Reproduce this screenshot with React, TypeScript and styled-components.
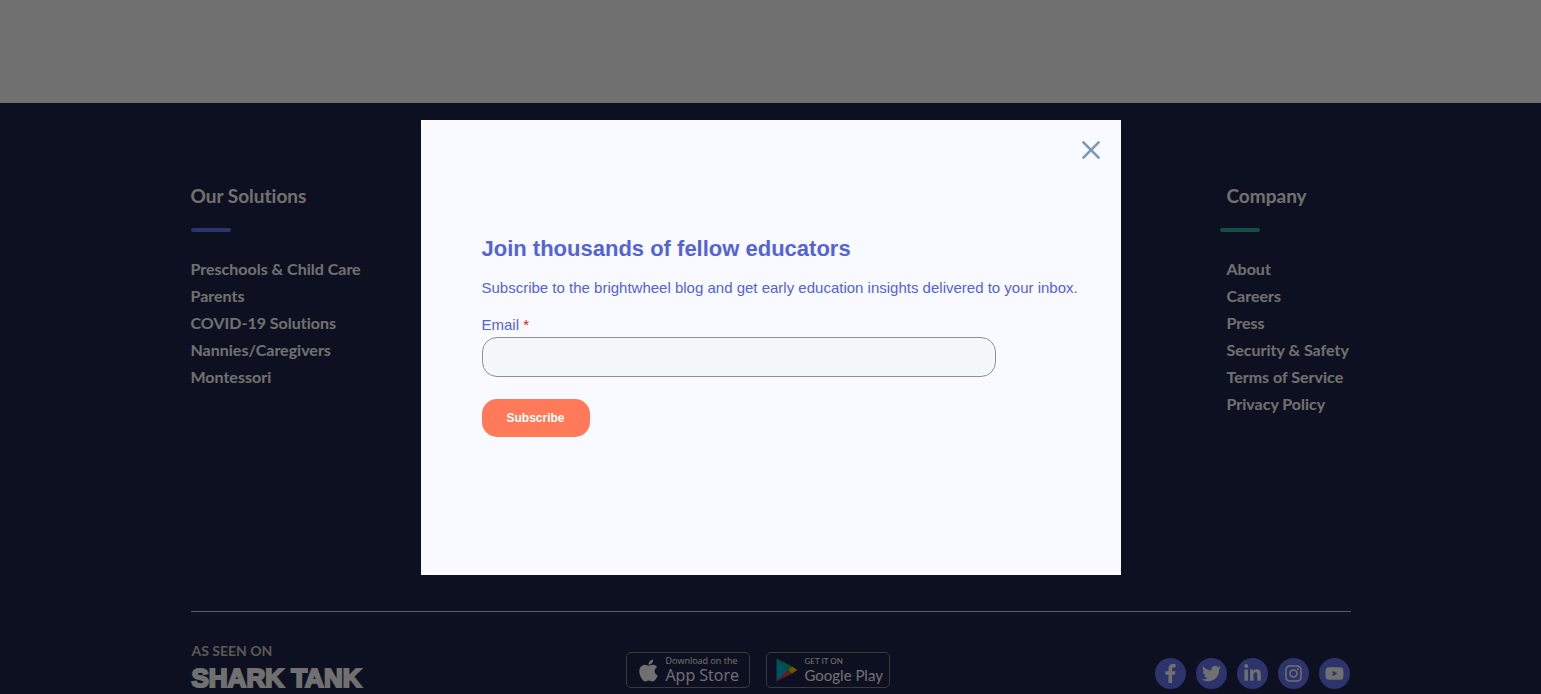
import React from "react";
import styled, { createGlobalStyle } from "styled-components";
import { FaApple, FaFacebookF, FaInstagram, FaLinkedinIn, FaTwitter, FaYoutube } from "react-icons/fa";

const GlobalStyle = createGlobalStyle`
  * { box-sizing: border-box; }
  body {
    margin: 0;
    background: #ffffff;
    font-family: Lato, "Liberation Sans", sans-serif;
    font-variant-ligatures: none;
  }
`;

const Page = styled.div`
  display: flex;
  flex-direction: column;
  height: 100vh;
  overflow: hidden;
`;

const Content = styled.main`
  flex: none;
  height: 103px;
  background: #ffffff;
`;

const Footer = styled.footer`
  flex: 1 0 auto;
  background: #1e2549;
  color: #ffffff;
  padding: 80px 24px 0;
`;

const Container = styled.div`
  max-width: 1160px;
  margin: 0 auto;
`;

const Columns = styled.div`
  display: flex;
  justify-content: space-between;
  min-height: 429px;
  border-bottom: 1px solid #d4d4de;
`;

const Column = styled.nav<{ $inset?: number }>`
  min-width: 131px;
  h2, ul { padding-left: ${(p) => p.$inset ?? 0}px; }
`;

const ColumnTitle = styled.h2`
  margin: 0;
  font-size: 19px;
  line-height: 26px;
  font-weight: 700;
`;

const Accent = styled.div<{ $color: string }>`
  width: 40px;
  height: 4px;
  margin: 19px 0 23px;
  border-radius: 2px;
  background: ${(p) => p.$color};
`;

const LinkList = styled.ul`
  margin: 0;
  padding: 0;
  list-style: none;
`;

const LinkItem = styled.li`
  font-size: 16px;
  line-height: 27px;
  font-weight: 700;
  white-space: nowrap;
  a { color: inherit; text-decoration: none; }
`;

const BottomBar = styled.div`
  display: flex;
  justify-content: space-between;
  align-items: flex-start;
  padding-top: 31px;
`;

const SeenOn = styled.div`
  padding-left: 1px;
  font-size: 14px;
  line-height: 16px;
  font-weight: 700;
  color: #c8c8c8;
`;

const SharkTank = styled.div`
  padding-left: 1px;
  font-family: "Liberation Sans", Arial, sans-serif;
  font-size: 26px;
  line-height: 38px;
  font-weight: 700;
  color: #ffffff;
  white-space: nowrap;
  -webkit-text-stroke: 2px #ffffff;
`;

const Badges = styled.div`
  display: flex;
  gap: 16px;
  padding-top: 9px;
`;

const Badge = styled.a<{ $gap: number }>`
  display: flex;
  align-items: center;
  gap: ${(p) => p.$gap}px;
  width: 124px;
  height: 36px;
  padding: 0 0 0 9px;
  border: 1px solid #80808c;
  border-radius: 5px;
  color: #ffffff;
  text-decoration: none;
  white-space: nowrap;
  svg { flex: none; }
`;

const BadgeText = styled.span<{ $font: string }>`
  display: flex;
  flex-direction: column;
  padding-bottom: 2px;
  font-family: ${(p) => p.$font};
`;

const BadgeSmall = styled.span<{ $size: number }>`
  font-size: ${(p) => p.$size}px;
  line-height: 12px;
`;

const BadgeLarge = styled.span<{ $size: number; $weight: number }>`
  font-size: ${(p) => p.$size}px;
  line-height: 16px;
  font-weight: ${(p) => p.$weight};
`;

const Socials = styled.div`
  display: flex;
  gap: 10px;
  padding-top: 15px;
`;

const Social = styled.a`
  display: flex;
  align-items: center;
  justify-content: center;
  width: 31px;
  height: 31px;
  border-radius: 50%;
  background: #6874f4;
  color: #ffffff;
  font-size: 19px;
`;

const Overlay = styled.div`
  position: fixed;
  inset: 0;
  display: flex;
  align-items: center;
  justify-content: center;
  background: rgba(0, 0, 0, 0.56);
`;

const Dialog = styled.section`
  position: relative;
  width: 700px;
  max-width: 100%;
  padding: 113px 40px 138px 61px;
  background: #f8faff;
  color: #5463d6;
  font-family: "Liberation Sans", Arial, sans-serif;
`;

const CloseButton = styled.button`
  position: absolute;
  top: 20px;
  right: 20px;
  display: flex;
  padding: 0;
  border: 0;
  background: none;
  color: #7c98b6;
  cursor: pointer;
`;

const DialogTitle = styled.h1`
  margin: 0;
  font-size: 22px;
  line-height: 32px;
  font-weight: 700;
`;

const Intro = styled.p`
  margin: 11px 0 14px;
  font-size: 15px;
  line-height: 24px;
`;

const Label = styled.label`
  display: block;
  font-size: 15px;
  line-height: 22px;
`;

const Required = styled.span`
  color: #e51520;
`;

const EmailInput = styled.input`
  display: block;
  width: 514px;
  max-width: 100%;
  height: 40px;
  margin: 1px 0 22px;
  padding: 0 14px;
  border: 1px solid #8f8f94;
  border-radius: 15px;
  background: #f5f8fa;
  font: inherit;
`;

const SubscribeButton = styled.button`
  display: block;
  height: 38px;
  padding: 0 25px;
  border: 0;
  border-radius: 15px;
  background: #ff7a59;
  color: #ffffff;
  font: 700 12px "Liberation Sans", Arial, sans-serif;
  cursor: pointer;
`;

const PlayLogo = () => (
  <svg width="22" height="24" viewBox="0 0 22 24" aria-hidden="true">
    <path d="M0.5 0.5V23.5L12 12Z" fill="#00b8dc" />
    <path d="M0.5 0.5L16 8.5L12 12Z" fill="#00c874" />
    <path d="M0.5 23.5L16 15.5L12 12Z" fill="#f03c48" />
    <path d="M16 8.5L21.5 12L16 15.5L12 12Z" fill="#fcc400" />
  </svg>
);

const solutions = ["Preschools & Child Care", "Parents", "COVID-19 Solutions", "Nannies/Caregivers", "Montessori"];
const company = ["About", "Careers", "Press", "Security & Safety", "Terms of Service", "Privacy Policy"];
const socials = [
  { name: "Facebook", icon: <FaFacebookF /> },
  { name: "Twitter", icon: <FaTwitter /> },
  { name: "LinkedIn", icon: <FaLinkedinIn /> },
  { name: "Instagram", icon: <FaInstagram /> },
  { name: "YouTube", icon: <FaYoutube /> },
];

interface FooterColumnProps {
  title: string;
  color: string;
  links: string[];
  inset?: number;
}

const FooterColumn = ({ title, color, links, inset }: FooterColumnProps) => (
  <Column $inset={inset} aria-label={title}>
    <ColumnTitle>{title}</ColumnTitle>
    <Accent $color={color} />
    <LinkList>
      {links.map((link) => (
        <LinkItem key={link}><a href="#">{link}</a></LinkItem>
      ))}
    </LinkList>
  </Column>
);

export default function App() {
  return (
    <Page>
      <GlobalStyle />
      <Content />
      <Footer>
        <Container>
          <Columns>
            <FooterColumn title="Our Solutions" color="#6874f4" links={solutions} />
            <FooterColumn title="Company" color="#2fb4a4" links={company} inset={7} />
          </Columns>
          <BottomBar>
            <div>
              <SeenOn>AS SEEN ON</SeenOn>
              <SharkTank>SHARK TANK</SharkTank>
            </div>
            <Badges>
              <Badge href="#" $gap={4}>
                <FaApple size={25} />
                <BadgeText $font='"Open Sans", sans-serif'>
                  <BadgeSmall $size={9}>Download on the</BadgeSmall>
                  <BadgeLarge $size={16} $weight={500}>App Store</BadgeLarge>
                </BadgeText>
              </Badge>
              <Badge href="#" $gap={6}>
                <PlayLogo />
                <BadgeText $font="Lato, sans-serif">
                  <BadgeSmall $size={8}>GET IT ON</BadgeSmall>
                  <BadgeLarge $size={15} $weight={400}>Google Play</BadgeLarge>
                </BadgeText>
              </Badge>
            </Badges>
            <Socials>
              {socials.map((s) => (
                <Social key={s.name} href="#" aria-label={s.name}>{s.icon}</Social>
              ))}
            </Socials>
          </BottomBar>
        </Container>
      </Footer>
      <Overlay>
        <Dialog role="dialog" aria-modal="true" aria-labelledby="dialog-title">
          <CloseButton type="button" aria-label="Close">
            <svg width="20" height="20" viewBox="0 0 20 20" fill="none" stroke="currentColor" strokeWidth="2.6" strokeLinecap="round">
              <path d="M2.4 2.4L17.6 17.6M17.6 2.4L2.4 17.6" />
            </svg>
          </CloseButton>
          <form onSubmit={(e) => e.preventDefault()}>
            <DialogTitle id="dialog-title">Join thousands of fellow educators</DialogTitle>
            <Intro>Subscribe to the brightwheel blog and get early education insights delivered to your inbox.</Intro>
            <Label htmlFor="email">Email <Required>*</Required></Label>
            <EmailInput id="email" type="email" required />
            <SubscribeButton type="submit">Subscribe</SubscribeButton>
          </form>
        </Dialog>
      </Overlay>
    </Page>
  );
}
